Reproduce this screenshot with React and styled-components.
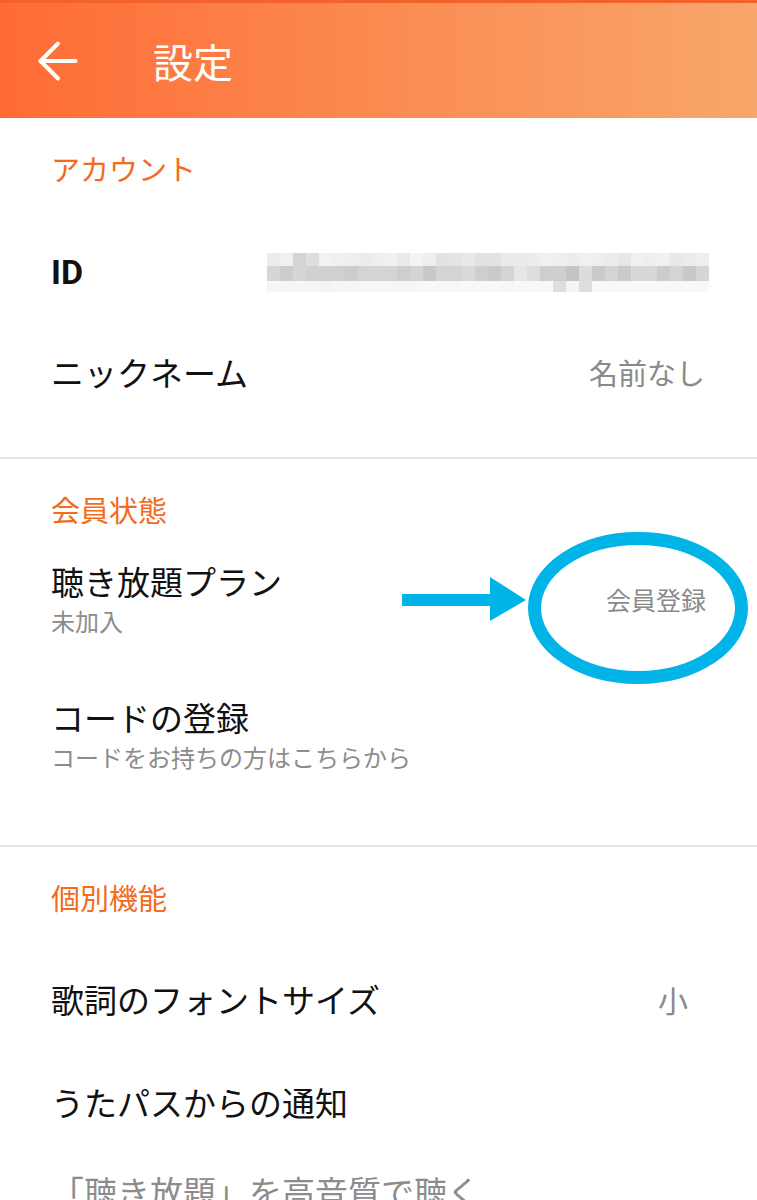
import React from 'react';
import styled, { createGlobalStyle } from 'styled-components';
import { ArrowLeft } from 'lucide-react';

const Global = createGlobalStyle`
  html, body { margin: 0; padding: 0; background: #fff; }
  body {
    font-family: "Noto Sans CJK JP", "Noto Sans", sans-serif;
    overflow: hidden;
  }
`;

const Page = styled.div`
  width: 757px;
  height: 1200px;
  overflow: hidden;
  background: #fff;
`;

const Header = styled.header`
  height: 118px;
  box-sizing: border-box;
  border-top: 3px solid #f4622c;
  background: linear-gradient(90deg, #ff6b36 0%, #fb8b50 50%, #f8a66b 100%);
  display: flex;
  align-items: center;
  padding-left: 28px;
`;

const BackButton = styled.button`
  width: 60px;
  height: 60px;
  padding: 0;
  border: 0;
  background: none;
  color: #fff;
  display: flex;
  align-items: center;
  justify-content: center;
`;

const Title = styled.h1`
  margin: 0 0 0 65px;
  font-size: 40px;
  line-height: 1;
  font-weight: 400;
  color: #fff;
`;

const Section = styled.section`
  padding-bottom: ${p => p.$pb}px;
  border-bottom: 2px solid #e6e6e6;
`;

const SectionTitle = styled.h2`
  margin: 0 0 ${p => p.$gap}px;
  padding: 28px 0 0 51px;
  font-size: 29px;
  line-height: 44px;
  font-weight: 400;
  color: #f36b1c;
`;

const Row = styled.div`
  position: relative;
  height: ${p => p.$h}px;
  box-sizing: border-box;
  display: flex;
  align-items: center;
  justify-content: space-between;
  padding: 0 ${p => p.$pr ?? 52}px 0 51px;
`;

const Label = styled.div`
  display: flex;
  flex-direction: column;
`;

const RowTitle = styled.div`
  font-family: ${p => (p.$latin ? '"Roboto", ' : '')}"Noto Sans CJK JP", sans-serif;
  font-size: ${p => (p.$latin ? 34 : 33)}px;
  line-height: 44px;
  font-weight: ${p => (p.$bold ? 700 : 400)};
  color: ${p => (p.$muted ? '#8c8c8c' : '#111')};
  white-space: nowrap;
`;

const RowSub = styled.div`
  font-size: 24px;
  line-height: 36px;
  color: #8c8c8c;
`;

const Value = styled.div`
  font-size: ${p => p.$size}px;
  line-height: 44px;
  color: #8a8a8a;
`;

const Mosaic = styled.div`
  display: grid;
  grid-template-columns: repeat(34, 13px);
  grid-template-rows: 13px 15px 11px;
  margin-right: -2px;
  filter: blur(0.4px);
`;

const Cell = styled.div`
  background: ${p => p.$c};
`;

const Annotation = styled.svg`
  position: absolute;
  left: 395px;
  top: 0;
  width: 362px;
  height: 160px;
  pointer-events: none;
  overflow: visible;
`;

const top = [236, 240, 212, 222, 242, 240, 238, 236, 238, 240, 234, 244, 238, 226, 228, 232, 226, 226, 234, 234, 236, 240, 238, 236, 240, 238, 236, 230, 240, 238, 240, 232, 236, 238];
const mid = [214, 204, 214, 208, 208, 208, 204, 212, 212, 212, 206, 212, 200, 212, 212, 218, 206, 202, 212, 230, 222, 206, 206, 196, 220, 202, 212, 202, 216, 216, 204, 212, 200, 214];
const bot = [246, 246, 246, 246, 244, 246, 246, 246, 246, 246, 246, 246, 248, 248, 246, 248, 248, 248, 246, 248, 248, 248, 222, 244, 222, 248, 248, 248, 248, 248, 248, 248, 248, 248];

const gray = v => `rgb(${v},${v},${v})`;

function BlurredId() {
  const cells = [];
  [top, mid, bot].forEach((r, ri) =>
    r.forEach((v, ci) => cells.push(<Cell key={`${ri}-${ci}`} $c={gray(v)} />))
  );
  return <Mosaic>{cells}</Mosaic>;
}

export default function App() {
  return (
    <Page>
      <Global />
      <Header>
        <BackButton aria-label="戻る">
          <ArrowLeft size={60} strokeWidth={1.6} />
        </BackButton>
        <Title>設定</Title>
      </Header>

      <Section $pb={35}>
        <SectionTitle $gap={32}>アカウント</SectionTitle>
        <Row $h={100} $pr={50}>
          <RowTitle $bold $latin>ID</RowTitle>
          <BlurredId />
        </Row>
        <Row $h={100}>
          <RowTitle>ニックネーム</RowTitle>
          <Value $size={29}>名前なし</Value>
        </Row>
      </Section>

      <Section $pb={42}>
        <SectionTitle $gap={0}>会員状態</SectionTitle>
        <Row $h={136} $pr={51}>
          <Label>
            <RowTitle>聴き放題プラン</RowTitle>
            <RowSub>未加入</RowSub>
          </Label>
          <Value $size={25}>会員登録</Value>
          <Annotation viewBox="0 0 362 160">
            <ellipse cx="243" cy="77" rx="103.5" ry="69.5" fill="none" stroke="#00b4e8" strokeWidth="13" />
            <rect x="7" y="63" width="90" height="12" fill="#00b4e8" />
            <polygon points="95,46 131,69 95,90" fill="#00b4e8" />
          </Annotation>
        </Row>
        <Row $h={136}>
          <Label>
            <RowTitle>コードの登録</RowTitle>
            <RowSub>コードをお持ちの方はこちらから</RowSub>
          </Label>
        </Row>
      </Section>

      <Section $pb={0}>
        <SectionTitle $gap={28}>個別機能</SectionTitle>
        <Row $h={103} $pr={69}>
          <RowTitle>歌詞のフォントサイズ</RowTitle>
          <Value $size={30}>小</Value>
        </Row>
        <Row $h={103}>
          <RowTitle>うたパスからの通知</RowTitle>
        </Row>
        <Row $h={76}>
          <RowTitle $muted>「聴き放題」を高音質で聴く</RowTitle>
        </Row>
      </Section>
    </Page>
  );
}
